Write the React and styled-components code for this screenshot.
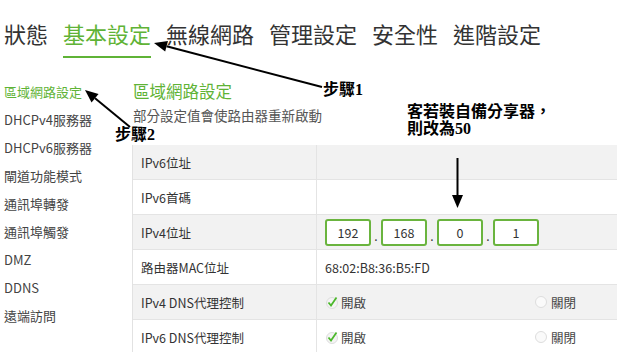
import React from 'react'
import styled, { createGlobalStyle } from "styled-components";

const GlobalStyle = createGlobalStyle`
  body {
    margin: 0;
    background: #fff;
    font-family: "Noto Sans CJK TC", "Noto Sans", sans-serif;
    color: #333;
  }
`;

const GREEN = "#5fb336";

const Page = styled.div`
  position: relative;
  width: 617px;
  height: 352px;
  overflow: hidden;
`;

const Nav = styled.div`
  display: flex;
  gap: 15px;
  padding-left: 4px;
  height: 62px;
`;

const NavItem = styled.div`
  font-size: 22px;
  line-height: 24px;
  padding-top: 21px;
  height: 35px;
  color: ${(props) => (props.active ? GREEN : "#333")};
  border-bottom: 2px solid ${(props) => (props.active ? GREEN : "transparent")};
`;

const Body = styled.div`
  display: flex;
`;

const Side = styled.div`
  box-sizing: border-box;
  width: 132px;
  flex-shrink: 0;
  padding-top: 16px;
  padding-left: 4px;
`;

const SideItem = styled.div`
  height: 28px;
  line-height: 28px;
  font-size: 13px;
  color: ${(props) => (props.active ? GREEN : "#444")};
`;

const Main = styled.div`
  flex: 1;
  padding-top: 18px;
`;

const Title = styled.div`
  font-size: 16.5px;
  line-height: 22px;
  color: ${GREEN};
  margin-left: 1px;
`;

const Sub = styled.div`
  font-size: 13.5px;
  line-height: 22px;
  color: #555;
  margin-left: 1px;
  margin-top: 2px;
`;

const Table = styled.div`
  margin-top: 19px;
  width: 500px;
  border-left: 1px solid #e2e2e2;
`;

const Row = styled.div`
  display: grid;
  grid-template-columns: 184px 1fr;
  height: 34px;
  background: ${(props) => (props.shade ? "#f2f2f2" : "#fff")};
  border-bottom: 1px solid #e4e4e4;
  font-size: 12.5px;
`;

const Label = styled.div`
  display: flex;
  align-items: center;
  padding-left: 8px;
  border-right: 1px solid #e4e4e4;
`;

const Value = styled.div`
  display: flex;
  align-items: center;
  padding-left: 8px;
`;

const IpBox = styled.div`
  width: 42px;
  height: 23px;
  border: 2px solid #6ab43e;
  border-radius: 3px;
  background: #fff;
  display: flex;
  align-items: center;
  justify-content: center;
  font-size: 12.5px;
`;

const Dot = styled.span`
  width: 10px;
  text-align: center;
  font-size: 12px;
  padding-top: 6px;
`;

const Option = styled.div`
  display: flex;
  align-items: center;
  gap: 2px;
  width: ${(props) => props.w || "auto"};
  color: #444;
`;

const Radio = styled.span`
  width: 10px;
  height: 10px;
  border-radius: 50%;
  border: 1px solid #ddd;
  background: #fafafa;
  margin-right: 2px;
`;

const Overlay = styled.svg`
  position: absolute;
  left: 0;
  top: 0;
  pointer-events: none;
`;

const Note = styled.div`
  position: absolute;
  left: ${(props) => props.x}px;
  top: ${(props) => props.y}px;
  font-family: "Liberation Serif", "Noto Sans CJK TC", serif;
  font-weight: 700;
  font-size: 16px;
  line-height: 17px;
  color: #000;
  white-space: nowrap;
`;

const Check = () => (
  <svg width="14" height="14" viewBox="0 0 14 14">
    <circle cx="7" cy="8" r="5.5" fill="#f4f4f4" stroke="#ddd" />
    <path d="M3.5 7.5 L6 10.5 L11.5 2.5" stroke="#4cb82c" strokeWidth="1.8" fill="none" />
  </svg>
);

const Arrow = ({ x1, y1, x2, y2 }) => {
  const a = Math.atan2(y2 - y1, x2 - x1);
  const L = 13, W = 5.5;
  const bx = x2 - L * Math.cos(a), by = y2 - L * Math.sin(a);
  const px = -Math.sin(a) * W, py = Math.cos(a) * W;
  return (
    <g>
      <line x1={x1} y1={y1} x2={bx} y2={by} stroke="#000" strokeWidth="2" />
      <polygon points={`${x2},${y2} ${bx + px},${by + py} ${bx - px},${by - py}`} fill="#000" />
    </g>
  );
};

const navs = ["狀態", "基本設定", "無線網路", "管理設定", "安全性", "進階設定"];
const sides = ["區域網路設定", "DHCPv4服務器", "DHCPv6服務器", "閘道功能模式", "通訊埠轉發", "通訊埠觸發", "DMZ", "DDNS", "遠端訪問"];

const App = () => {
  return (
    <Page>
      <GlobalStyle />
      <Nav>
        {navs.map((n, i) => (
          <NavItem key={n} active={i === 1}>{n}</NavItem>
        ))}
      </Nav>
      <Body>
        <Side>
          {sides.map((s, i) => (
            <SideItem key={s} active={i === 0}>{s}</SideItem>
          ))}
        </Side>
        <Main>
          <Title>區域網路設定</Title>
          <Sub>部分設定值會使路由器重新啟動</Sub>
          <Table>
            <Row shade><Label>IPv6位址</Label><Value /></Row>
            <Row><Label>IPv6首碼</Label><Value /></Row>
            <Row shade>
              <Label>IPv4位址</Label>
              <Value>
                <IpBox>192</IpBox><Dot>.</Dot>
                <IpBox>168</IpBox><Dot>.</Dot>
                <IpBox>0</IpBox><Dot>.</Dot>
                <IpBox>1</IpBox>
              </Value>
            </Row>
            <Row><Label>路由器MAC位址</Label><Value>68:02:B8:36:B5:FD</Value></Row>
            <Row shade>
              <Label>IPv4 DNS代理控制</Label>
              <Value>
                <Option w="210px"><Check />開啟</Option>
                <Option><Radio />關閉</Option>
              </Value>
            </Row>
            <Row>
              <Label>IPv6 DNS代理控制</Label>
              <Value>
                <Option w="210px"><Check />開啟</Option>
                <Option><Radio />關閉</Option>
              </Value>
            </Row>
          </Table>
        </Main>
      </Body>
      <Overlay width="617" height="352">
        <Arrow x1={322} y1={87} x2={154} y2={43} />
        <Arrow x1={130} y1={127} x2={85} y2={90} />
        <Arrow x1={457.5} y1={158} x2={457.5} y2={208} />
      </Overlay>
      <Note x={323} y={81}>步驟1</Note>
      <Note x={115} y={126}>步驟2</Note>
      <Note x={407} y={103}>客若裝自備分享器，<br />則改為50</Note>
    </Page>
  )
}

export default App
